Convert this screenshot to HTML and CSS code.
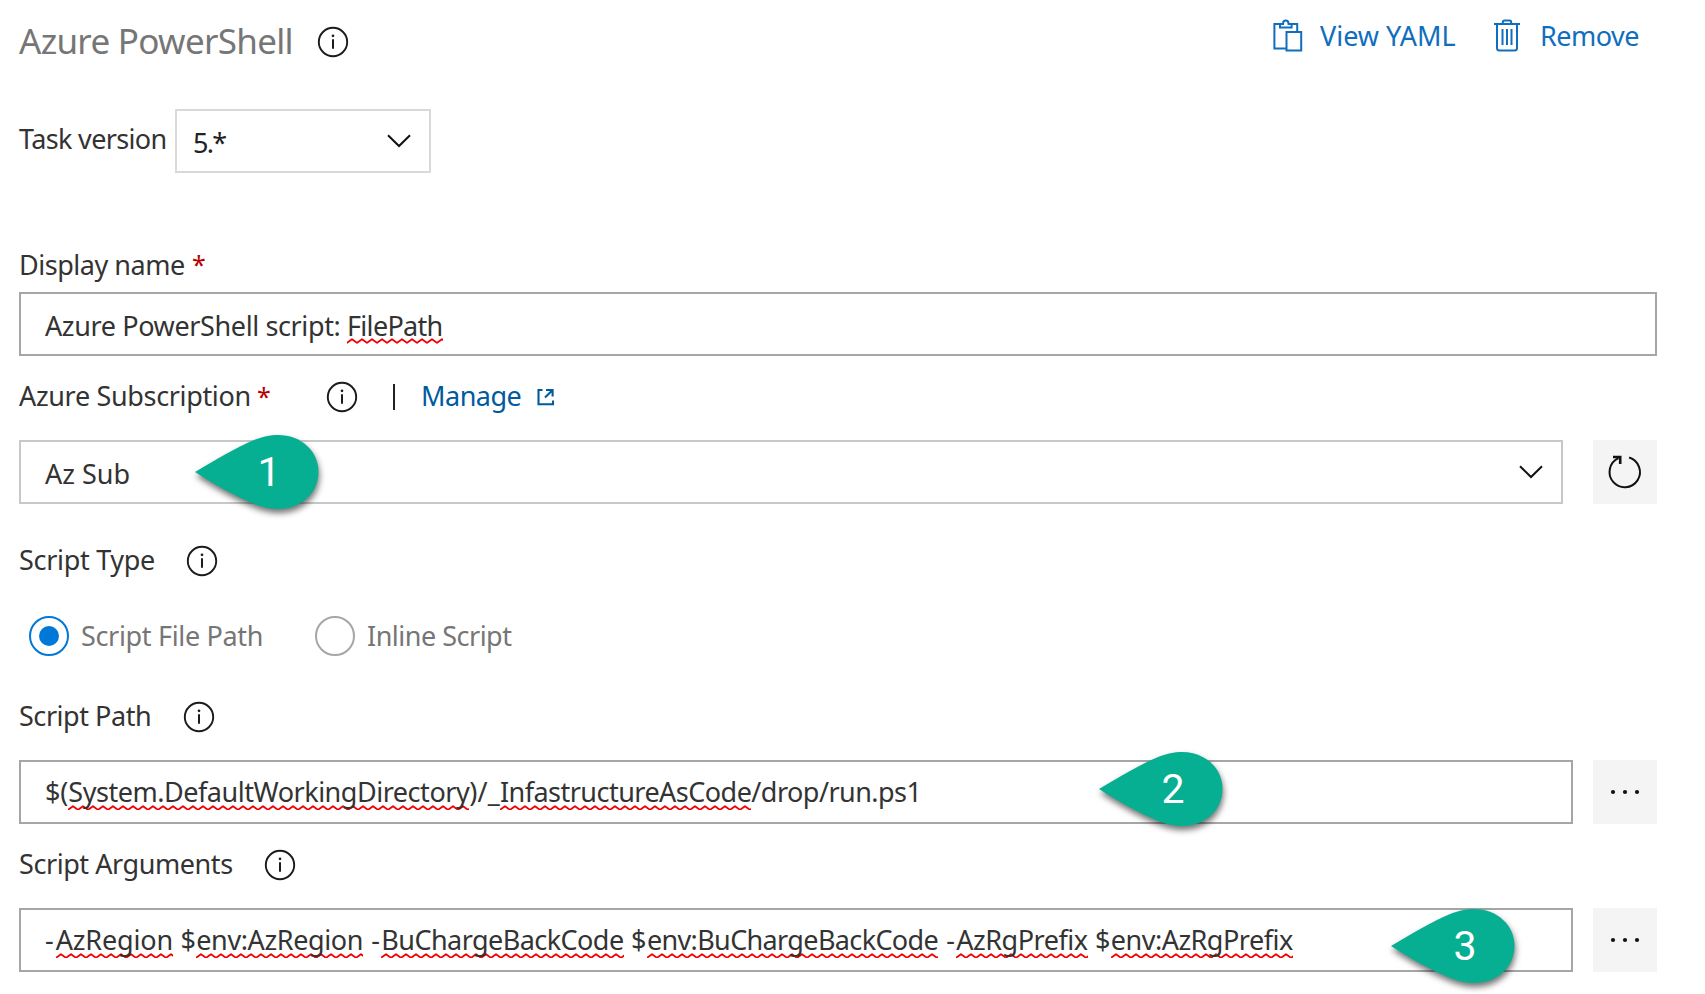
FILE: index.html
```html
<!DOCTYPE html>
<html lang="en">
<head>
<meta charset="utf-8">
<title>Azure PowerShell</title>
<link rel="stylesheet" href="styles.css">
</head>
<body>
<svg class="defs" aria-hidden="true">
  <symbol id="info" viewBox="0 0 32 32"><circle cx="16" cy="16" r="14.2" fill="none" stroke="#1b1b1b" stroke-width="1.9"/><path d="M16 13.2v9.6" stroke="#1b1b1b" stroke-width="2"/><circle cx="16" cy="9.8" r="1.35" fill="#1b1b1b"/></symbol>
  <symbol id="chevron" viewBox="0 0 24 14"><path d="M1 1.2 12 12 23 1.2" fill="none" stroke="#111" stroke-width="2"/></symbol>
  <symbol id="pin" viewBox="0 0 124 74"><path d="M0 37C20 25 42 12 58 5.500C68 1.500 75 0 83 0C106 0 123.500 16 123.500 37S106 74 83 74C75 74 68 72.500 58 68.500C42 62 20 50 0 37Z" fill="#07af92"/></symbol>
</svg>
<main class="task">
  <header class="head">
    <h1 class="title">Azure PowerShell</h1>
    <svg class="info"><use href="#info"/></svg>
    <nav class="actions">
      <a class="action yaml">
        <svg class="clip" viewBox="0 0 30 33" fill="none" stroke="#106ebe" stroke-width="2"><path d="M13 29.500H1.400V5H7M17 5h7.200v7M7 4.900v3.600h11.600V4.900h-3C15.500 2.800 14.500 1.500 12.800 1.500S10 2.800 10 4.900ZM13.500 13h14.700v18.500H13.500Z"/></svg>
        <span class="yaml-text">View YAML</span>
      </a>
      <a class="action remove">
        <svg class="bin" viewBox="0 0 26 33" fill="none" stroke="#106ebe" stroke-width="2"><path d="M0 5H26M8.800 5V3.200Q8.800 1.500 10.500 1.500H15.500Q17.200 1.500 17.200 3.200V5M3 5V29Q3 31.500 5.500 31.500H20.500Q23 31.500 23 29V5M8.500 10V26M13 10V26M17.500 10V26"/></svg>
        <span class="remove-text">Remove</span>
      </a>
    </nav>
  </header>

  <div class="version">
    <span class="version-label">Task version</span>
    <div class="select small"><span class="select-text five">5.*</span><svg class="chevron"><use href="#chevron"/></svg></div>
  </div>

  <div class="label name-label"><span class="name-text">Display name</span><span class="req">*</span></div>
  <div class="input full"><span class="v-name">Azure PowerShell script:&nbsp;</span><span class="sp v-file">FilePath</span></div>

  <div class="label sub-label"><span class="sub-text">Azure Subscription</span><span class="req">*</span><svg class="info"><use href="#info"/></svg><i class="bar"></i><a class="manage">Manage</a><svg class="ext" viewBox="0 0 18 18" fill="none" stroke="#005a9e" stroke-width="2.1"><path d="M5.500 2H1.500V16.200H16V12.500M9 2H15.600V8.500M15.600 2 8 9.600"/></svg></div>
  <div class="row">
    <div class="select wide"><span class="select-text az">Az Sub</span><svg class="chevron"><use href="#chevron"/></svg>
      <div class="pin pin-1"><svg class="pin-shape"><use href="#pin"/></svg><b class="pin-num">1</b></div>
    </div>
    <button class="btn"><svg class="refresh" viewBox="0 0 36 36" fill="none" stroke="#111" stroke-width="2"><path d="M22.100 3.500A15.200 15.200 0 1 1 11.500 4.200"/><path d="M6 3H13.200V10" stroke-width="2.600"/></svg></button>
  </div>

  <div class="label type-label"><span class="type-text">Script Type</span><svg class="info"><use href="#info"/></svg></div>
  <div class="radios">
    <label class="radio on"><i class="dot"></i><span class="r-file">Script File Path</span></label>
    <label class="radio"><i class="dot"></i><span class="r-inline">Inline Script</span></label>
  </div>

  <div class="label path-label"><span class="path-text">Script Path</span><svg class="info"><use href="#info"/></svg></div>
  <div class="row">
    <div class="input"><span class="p1">$(</span><span class="sp p2">System.DefaultWorkingDirectory</span><span class="p3">)/_</span><span class="sp p4">InfastructureAsCode</span><span class="p5">/drop/run.ps1</span>
      <div class="pin pin-2"><svg class="pin-shape"><use href="#pin"/></svg><b class="pin-num">2</b></div>
    </div>
    <button class="btn"><svg class="dots" viewBox="0 0 30 6"><circle cx="3" cy="3" r="2.100"/><circle cx="15" cy="3" r="2.100"/><circle cx="27" cy="3" r="2.100"/></svg></button>
  </div>

  <div class="label args-label"><span class="args-text">Script Arguments</span><svg class="info"><use href="#info"/></svg></div>
  <div class="row">
    <div class="input"><span class="g0">-</span><span class="sp g1">AzRegion</span><span class="gs">&nbsp;$</span><span class="sp g2">env:AzRegion</span><span class="gd">&nbsp;-</span><span class="sp g3">BuChargeBackCode</span><span class="gs">&nbsp;$</span><span class="sp g4">env:BuChargeBackCode</span><span class="gd">&nbsp;-</span><span class="sp g5">AzRgPrefix</span><span class="gs">&nbsp;$</span><span class="sp g6">env:AzRgPrefix</span>
      <div class="pin pin-3"><svg class="pin-shape"><use href="#pin"/></svg><b class="pin-num">3</b></div>
    </div>
    <button class="btn"><svg class="dots" viewBox="0 0 30 6"><circle cx="3" cy="3" r="2.100"/><circle cx="15" cy="3" r="2.100"/><circle cx="27" cy="3" r="2.100"/></svg></button>
  </div>
</main>
</body>
</html>
```
FILE: styles.css
```css
* { box-sizing: border-box; }
body { margin: 0; background: #fff; color: #333; font: 27px/36px "Noto Sans", "Open Sans", sans-serif; letter-spacing: -0.7px; overflow: hidden; }
span, a { white-space: nowrap; }
svg { display: block; flex: none; }
.defs { position: absolute; width: 0; height: 0; }
.task { width: 1657px; height: 994px; padding-left: 19px; }
.head { display: flex; align-items: center; height: 84px; }
.title { margin: 0 0 3px; width: 273px; font-size: 35px; font-weight: 400; line-height: 48px; color: #767676; white-space: nowrap; }
.info { width: 32px; height: 32px; }
.head .info { margin-left: 24.5px; }
.actions { display: flex; margin: 0 18px 14px auto; color: #106ebe; }
.action { display: flex; align-items: center; }
.action span { padding-top: 2px; }
.clip { width: 30px; height: 33px; margin-right: 17px; }
.bin { width: 26px; height: 33px; margin-right: 20px; }
.yaml-text { width: 174px; letter-spacing: 0; }
.remove-text { width: 99px; letter-spacing: -0.5px; }
.version { display: flex; align-items: center; height: 64px; margin-top: 25px; }
.version-label { width: 156px; padding-bottom: 5px; letter-spacing: -0.65px; }
.select, .input { position: relative; display: flex; align-items: center; height: 64px; border: 2px solid #a6a6a6; padding-left: 24px; }
.select { justify-content: space-between; border-color: #c8c8c8; padding-right: 18px; }
.small { width: 256px; border-color: #d9d9d9; padding-left: 16px; color: #222; }
.select-text { padding-top: 4px; }
.five { letter-spacing: -1.7px; }
.az { letter-spacing: 0; }
.chevron { width: 24px; height: 14px; }
.label { display: flex; align-items: center; height: 40px; }
.label > span, .manage { padding-bottom: 3px; }
.label > .req { width: 12px; margin-left: 8px; font-size: 25px; color: #b50000; }
.name-label { margin: 72px 0 7px; }
.label > .name-text { width: 165px; padding-bottom: 1px; letter-spacing: -0.48px; }
.input > span { padding-top: 3px; }
.row .input > span { padding-top: 0; }
.sp { background: url("data:image/svg+xml,%3Csvg xmlns='http://www.w3.org/2000/svg' width='10' height='6'%3E%3Cpath d='M-5 1.200L0 4.800L5 1.200L10 4.800L15 1.200' fill='none' stroke='%23f00000' stroke-width='1.900' stroke-linejoin='round'/%3E%3C/svg%3E") repeat-x 0 33px; }
.row .sp { background-position: 0 31px; }
.v-name { letter-spacing: -0.38px; }
.sub-label { margin: 21px 0 23px; }
.sub-text { width: 230px; letter-spacing: -0.34px; }
.sub-label .info { margin-left: 57px; }
.bar { width: 2px; height: 26px; margin: 0 26px 0 35px; background: #222; }
.manage { width: 116px; color: #005a9e; letter-spacing: -0.5px; }
.ext { width: 18px; height: 18px; }
.row { display: grid; grid-template-columns: 1fr 64px; gap: 20px; }
.wide { margin-right: 10px; }
.btn { display: grid; place-items: center; width: 64px; height: 64px; border: 0; padding: 0; background: #f4f4f4; }
.refresh { width: 36px; height: 36px; }
.dots { width: 30px; height: 6px; fill: #111; }
.type-label { margin: 37px 0 35px; }
.type-text { width: 167px; letter-spacing: -0.3px; }
.radios { display: flex; height: 40px; padding-left: 10px; color: #767676; }
.radio { display: flex; align-items: center; width: 286px; }
.dot { display: grid; place-items: center; width: 40px; height: 40px; margin-right: 12px; border: 2px solid #a6a6a6; border-radius: 50%; }
.on .dot { border-color: #0078d7; }
.on .dot::after { content: ""; width: 20px; height: 20px; border-radius: 50%; background: #0078d7; }
.r-file { letter-spacing: -0.33px; }
.r-inline { letter-spacing: -0.5px; }
.path-label { margin: 41px 0 23px; }
.path-text { width: 163.5px; letter-spacing: -0.45px; }
.args-label { margin: 21px 0 23px; }
.args-text { width: 245px; letter-spacing: -0.43px; }
.p1 { letter-spacing: -0.1px; }
.p2 { letter-spacing: -0.47px; }
.p3 { letter-spacing: 0.2px; }
.p4, .p5 { letter-spacing: -0.53px; }
.g0 { letter-spacing: 2px; }
.g1 { letter-spacing: -0.16px; }
.g2 { letter-spacing: -0.38px; }
.g3 { letter-spacing: -0.55px; }
.g5 { letter-spacing: -0.48px; }
.g4 { letter-spacing: -0.64px; }
.g6 { letter-spacing: -0.5px; }
.gs { letter-spacing: 0.4px; }
.gd { letter-spacing: 1.2px; }
.pin { position: absolute; width: 124px; height: 74px; }
.pin-1 { left: 174px; top: -7px; }
.pin-2 { left: 1078px; top: -10px; }
.pin-3 { left: 1370px; top: -1px; }
.pin-shape { width: 124px; height: 74px; overflow: visible; filter: drop-shadow(1px 4px 3px rgba(0,0,0,.55)); }
.pin-num { position: absolute; left: 54px; top: 14px; width: 40px; text-align: center; font: 41px/46px Roboto, Arial, sans-serif; letter-spacing: 0; color: #fff; }
```
